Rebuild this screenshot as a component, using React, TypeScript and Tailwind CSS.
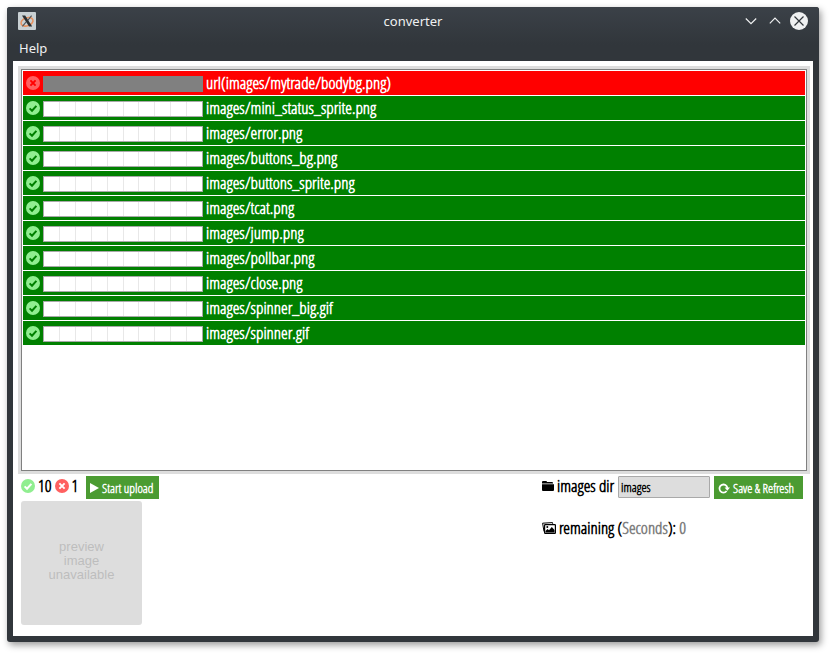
import React from "react";

const files = [
  { name: "url(images/mytrade/bodybg.png)", ok: false },
  { name: "images/mini_status_sprite.png", ok: true },
  { name: "images/error.png", ok: true },
  { name: "images/buttons_bg.png", ok: true },
  { name: "images/buttons_sprite.png", ok: true },
  { name: "images/tcat.png", ok: true },
  { name: "images/jump.png", ok: true },
  { name: "images/pollbar.png", ok: true },
  { name: "images/close.png", ok: true },
  { name: "images/spinner_big.gif", ok: true },
  { name: "images/spinner.gif", ok: true },
];

function StatusIcon({ ok, mark }: { ok: boolean; mark: string }) {
  return (
    <svg viewBox="0 0 14 14" className="size-3.5 shrink-0" fill="none" aria-hidden="true">
      <circle cx="7" cy="7" r="7" fill={ok ? "#90ee90" : "#ff6060"} />
      {ok ? (
        <path d="M3.6 7.4 6 9.7 10.4 4.8" stroke={mark} strokeWidth="2" />
      ) : (
        <path d="M4.4 4.4l5.2 5.2M9.6 4.4 4.4 9.6" stroke={mark} strokeWidth="1.9" />
      )}
    </svg>
  );
}

function Progress({ ok }: { ok: boolean }) {
  if (!ok) return <div className="h-4 w-40 shrink-0 bg-[#808080]" />;
  return (
    <div className="flex h-4 w-40 shrink-0 border border-[#a9a9a9] bg-white">
      {Array.from({ length: 10 }, (_, i) => (
        <span key={i} className="flex-1 border-r border-[#e8e8e8] last:border-r-0" />
      ))}
    </div>
  );
}

function TitleBar() {
  return (
    <header className="bg-linear-to-b from-[#3b4148] to-[#31363b] to-70% font-['Noto_Sans',sans-serif] text-[13px] font-normal text-[#eff0f1]">
      <div className="grid h-7 grid-cols-[1fr_auto_1fr] items-center pr-[11px] pl-[11px]">
        <svg viewBox="0 0 18 18" className="size-[18px]" fill="none" aria-hidden="true">
          <rect width="18" height="18" rx="1" fill="#c9d0d3" />
          <ellipse cx="9" cy="9.8" rx="6.2" ry="4" stroke="#e8925f" strokeWidth="1.6" transform="rotate(-20 9 9.8)" />
          <path d="M4 3.6h3.2l7 10.8h-3.2z" fill="#2a2e31" />
          <path d="M13.6 3.6 9.8 8.3M8.2 9.8 4.4 14.4" stroke="#50565a" strokeWidth="1.1" />
        </svg>
        <h1 className="leading-5">converter</h1>
        <div className="flex items-center justify-end gap-3">
          <button type="button" aria-label="Minimize">
            <svg viewBox="0 0 12 12" className="size-3" fill="none">
              <path d="M.8 3.5 6 8.7l5.2-5.2" stroke="#eff0f1" strokeWidth="1.2" />
            </svg>
          </button>
          <button type="button" aria-label="Maximize">
            <svg viewBox="0 0 12 12" className="size-3" fill="none">
              <path d="M.8 8.3 6 3.1l5.2 5.2" stroke="#eff0f1" strokeWidth="1.2" />
            </svg>
          </button>
          <button type="button" aria-label="Close" className="-ml-[3px]">
            <svg viewBox="0 0 18 18" className="size-[18px]" fill="none">
              <circle cx="9" cy="9" r="9" fill="#eff0f1" />
              <path d="m4.5 4.5 9 9m0-9-9 9" stroke="#31363b" strokeWidth="1.2" />
            </svg>
          </button>
        </div>
      </div>
      <nav className="flex h-[26px] items-center pl-3">
        <button type="button" className="leading-5">Help</button>
      </nav>
    </header>
  );
}

const actionButton =
  "flex h-[23px] shrink-0 items-center bg-[#4b9b32] px-1 text-[13px] leading-4 whitespace-nowrap text-white";

export default function App() {
  return (
    <div className="min-h-screen bg-white pt-[7px] pr-[13px] pb-[13px] pl-[7px] font-['Open_Sans_Condensed_Light','Roboto_Condensed',Roboto,sans-serif] font-bold">
      <div className="overflow-hidden rounded-[3px] bg-[#31363b] shadow-[2px_3px_7px_rgba(0,0,0,0.4)]">
        <TitleBar />
        <main className="mx-1.5 mb-1.5 bg-white px-[5px] pt-[5px] pb-[11px] text-[17px] text-black">
          <section className="mr-[-2px] border-3 border-[#dddddd]">
            <ul className="h-[402px] space-y-px overflow-hidden border border-[#808080] p-px">
              {files.map((f) => (
                <li
                  key={f.name}
                  className={`flex h-6 items-center pl-[3px] text-white ${f.ok ? "bg-[#008000]" : "bg-[#ff0000]"}`}
                >
                  <StatusIcon ok={f.ok} mark={f.ok ? "#008000" : "#ff0000"} />
                  <div className="mt-0.5 ml-[3px]">
                    <Progress ok={f.ok} />
                  </div>
                  <span className="ml-[3px] leading-6">{f.name}</span>
                </li>
              ))}
            </ul>
          </section>
          <div className="flex items-start justify-between pt-0.5 pr-[5px] pl-[3px]">
            <section>
              <div className="flex h-[25px] items-start">
                <div className="flex h-5 w-[65px] items-center gap-[3px] leading-6">
                  <StatusIcon ok mark="#ffffff" />
                  <span>10</span>
                  <StatusIcon ok={false} mark="#ffffff" />
                  <span>1</span>
                </div>
                <button type="button" className={`${actionButton} w-[73px] gap-[3px]`}>
                  <svg viewBox="0 0 9 10" className="h-2.5 w-[9px] shrink-0" aria-hidden="true">
                    <path d="M0 0 9 5 0 10z" fill="#fff" />
                  </svg>
                  <span>Start upload</span>
                </button>
              </div>
              <div
                role="img"
                aria-label="preview image unavailable"
                className="flex h-[124px] w-[121px] items-center justify-center rounded-[3px] bg-[#dddddd] pb-1 text-center font-['Liberation_Sans',Arial,sans-serif] text-[13px] leading-[14px] font-normal text-[#bdbdbd]"
              >
                <p>
                  preview
                  <br />
                  image
                  <br />
                  unavailable
                </p>
              </div>
            </section>
            <section className="w-[261px]">
              <div className="flex items-start">
                <label htmlFor="dir" className="flex h-5 w-[76px] items-center gap-[3px] leading-6 whitespace-nowrap">
                  <svg viewBox="0 0 12 10" className="h-2.5 w-3 shrink-0" aria-hidden="true">
                    <path d="M0 2V1q0-1 1-1h3q1 0 1 1h5q1 0 1 1v.5H0zM0 3.2h12V9q0 1-1 1H1Q0 10 0 9z" />
                  </svg>
                  images dir
                </label>
                <input
                  id="dir"
                  type="text"
                  defaultValue="images"
                  className="h-[22px] w-[92px] rounded-[1px] border border-[#a9a9a9] bg-[#dddddd] px-0.5 text-[13px] leading-4 outline-none"
                />
                <button type="button" className={`${actionButton} ml-1 w-[89px] gap-[3px]`}>
                  <svg viewBox="0 0 12 12" className="size-3 shrink-0" fill="none" aria-hidden="true">
                    <path d="M8.6 9A4 4 0 1 1 9.4 6" stroke="#fff" strokeWidth="1.8" />
                    <path d="M6.6 5.6H12L9.3 8.8z" fill="#fff" />
                  </svg>
                  <span>Save &amp; Refresh</span>
                </button>
              </div>
              <p className="mt-[17px] flex items-center gap-[3px] leading-6 whitespace-nowrap">
                <svg viewBox="0 0 14 12" className="h-3 w-3.5 shrink-0" fill="none" aria-hidden="true">
                  <path d="M2 9.5.6 1.2 10.5.6l.2 1.2" stroke="#000" />
                  <rect x="2.6" y="2.6" width="10.8" height="8.8" rx=".6" stroke="#000" strokeWidth="1.2" />
                  <path d="M3.5 10.5V9l2-2 1.5 1.2L9.8 5l2.7 3v2.5z" fill="#000" />
                  <circle cx="5.3" cy="5" r="1" fill="#000" />
                </svg>
                <span>
                  remaining (<span className="text-[#808080]">Seconds</span>): <span className="text-[#808080]">0</span>
                </span>
              </p>
            </section>
          </div>
        </main>
      </div>
    </div>
  );
}
